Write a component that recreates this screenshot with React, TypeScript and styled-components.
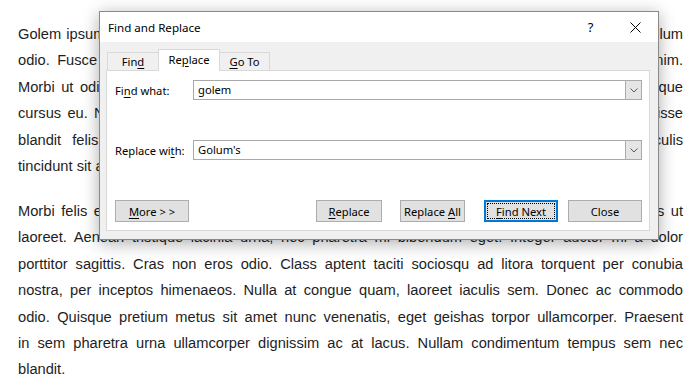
import React from 'react';
import styled, { createGlobalStyle } from 'styled-components';

const GlobalStyle = createGlobalStyle`
  html, body { margin: 0; padding: 0; background: #fff; }
  body { width: 699px; height: 390px; overflow: hidden; }
`;

const Page = styled.div`
  position: relative;
  width: 699px;
  height: 390px;
  box-sizing: border-box;
  padding: 21px 16px 0 18px;
  background: #fff;
  overflow: hidden;
`;

const Paragraph = styled.div`
  font-family: "Liberation Sans", Arial, sans-serif;
  font-size: 14.67px;
  line-height: 26.4px;
  color: #1e1e1e;
  & + & {
    margin-top: 18.6px;
  }
`;

const Line = styled.div<{ $last?: boolean }>`
  text-align: ${(p) => (p.$last ? 'left' : 'justify')};
  text-align-last: ${(p) => (p.$last ? 'left' : 'justify')};
`;

const Dialog = styled.div`
  position: absolute;
  left: 99px;
  top: 11px;
  width: 560px;
  height: 229px;
  box-sizing: border-box;
  border: 1px solid #8a8a8a;
  background: #f0f0f0;
  box-shadow: 0 3px 16px rgba(0, 0, 0, 0.33);
  display: flex;
  flex-direction: column;
  font-family: "Noto Sans", "Segoe UI", sans-serif;
  font-size: 11.2px;
  color: #000;
`;

const TitleBar = styled.div`
  height: 30px;
  background: #fff;
  display: flex;
  align-items: center;
  font-size: 11.6px;
`;

const Title = styled.div`
  flex: 1;
  padding-left: 8px;
`;

const TitleButton = styled.div`
  width: 45px;
  height: 30px;
  display: flex;
  align-items: center;
  justify-content: center;
  font-size: 13px;
`;

const Body = styled.div`
  flex: 1;
  display: flex;
  flex-direction: column;
  padding: 7px 8px 8px 6px;
`;

const TabRow = styled.div`
  display: flex;
  align-items: flex-end;
  height: 22px;
  padding-left: 1px;
  margin-bottom: -1px;
  position: relative;
  z-index: 1;
`;

const Tab = styled.div<{ $active?: boolean; $w: number }>`
  box-sizing: border-box;
  width: ${(p) => p.$w}px;
  height: ${(p) => (p.$active ? 22 : 18)}px;
  margin-bottom: ${(p) => (p.$active ? 0 : 1)}px;
  border: 1px solid #d9d9d9;
  border-bottom: none;
  background: ${(p) => (p.$active ? '#fff' : '#f0f0f0')};
  display: flex;
  align-items: ${(p) => (p.$active ? 'flex-start' : 'center')};
  padding-top: ${(p) => (p.$active ? 2 : 0)}px;
  justify-content: center;
  position: relative;
  z-index: ${(p) => (p.$active ? 2 : 1)};
  & + & {
    margin-left: -1px;
  }
`;

const Caption = styled.span`
  white-space: pre;
`;

const Key = styled.span`
  text-decoration: underline;
  text-underline-offset: 2px;
  text-decoration-thickness: 1px;
`;

const Panel = styled.div`
  flex: 1;
  background: #fff;
  border: 1px solid #d9d9d9;
  display: flex;
  flex-direction: column;
  padding: 9px 7px 8px 8px;
`;

const FieldRow = styled.div`
  display: flex;
  align-items: center;
  height: 20px;
  & + & {
    margin-top: 40px;
  }
`;

const Label = styled.div`
  width: 78px;
  flex: none;
`;

const Combo = styled.div`
  flex: 1;
  height: 20px;
  box-sizing: border-box;
  border: 1px solid #a9a9a9;
  display: flex;
  align-items: stretch;
`;

const ComboText = styled.div`
  flex: 1;
  padding-left: 4px;
  line-height: 18px;
`;

const ComboButton = styled.div`
  width: 16px;
  box-sizing: border-box;
  background: #e5e5e5;
  border-left: 1px solid #acacac;
  display: flex;
  align-items: center;
  justify-content: center;
`;

const ButtonRow = styled.div`
  margin-top: auto;
  display: flex;
  align-items: center;
`;

const Button = styled.div<{ $w: number; $gap?: number; $push?: boolean; $default?: boolean }>`
  position: relative;
  box-sizing: border-box;
  width: ${(p) => p.$w}px;
  height: 22px;
  margin-left: ${(p) => (p.$push ? 'auto' : `${p.$gap ?? 0}px`)};
  background: #e1e1e1;
  border: ${(p) => (p.$default ? '2px solid #0078d7' : '1px solid #adadad')};
  display: flex;
  align-items: center;
  justify-content: center;
  &::after {
    content: '';
    display: ${(p) => (p.$default ? 'block' : 'none')};
    position: absolute;
    inset: 1px;
    border: 1px dotted #000;
  }
`;

const Chevron = () => (
  <svg width="8" height="5" viewBox="0 0 8 5">
    <path d="M0.5 0.5 L4 4 L7.5 0.5" fill="none" stroke="#5a5a5a" strokeWidth="1" />
  </svg>
);

const CloseIcon = () => (
  <svg width="11" height="11" viewBox="0 0 11 11">
    <path d="M0.5 0.5 L10.5 10.5 M10.5 0.5 L0.5 10.5" stroke="#000" strokeWidth="1" />
  </svg>
);

const para1 = [
  'Golem ipsum dolor sit amet, consectetur adipiscing elit. Nam vitae nisl quis magna luctus vestibulum',
  'odio. Fusce sodales, lorem vel pretium tincidunt, nibh turpis elementum lacus, et a rutrum enim.',
  'Morbi ut odio vel augue tincidunt feugiat. Phasellus sed turpis at neque mollis et aliquam tristique',
  'cursus eu. Nunc pulvinar mi sed lectus ultrices, at eleifend arcu blandit tempor nunc. Suspendisse',
  'blandit felis id purus luctus, sed vehicula lorem convallis. Etiam pretium nisi at mi iaculis',
  'tincidunt sit amet a libero.',
];

const para2 = [
  'Morbi felis erat, commodo in dignissim vitae, dictum id lorem sed. Curabitur non magna finibus ut',
  'laoreet. Aenean tristique lacinia urna, nec pharetra mi bibendum eget. Integer auctor mi a dolor',
  'porttitor sagittis. Cras non eros odio. Class aptent taciti sociosqu ad litora torquent per conubia',
  'nostra, per inceptos himenaeos. Nulla at congue quam, laoreet iaculis sem. Donec ac commodo',
  'odio. Quisque pretium metus sit amet nunc venenatis, eget geishas torpor ullamcorper. Praesent',
  'in sem pharetra urna ullamcorper dignissim ac at lacus. Nullam condimentum tempus sem nec',
  'blandit.',
];

export default function App() {
  return (
    <>
      <GlobalStyle />
      <Page>
        <Paragraph>
          {para1.map((l, i) => (
            <Line key={i} $last={i === para1.length - 1}>{l}</Line>
          ))}
        </Paragraph>
        <Paragraph>
          {para2.map((l, i) => (
            <Line key={i} $last={i === para2.length - 1}>{l}</Line>
          ))}
        </Paragraph>

        <Dialog>
          <TitleBar>
            <Title>Find and Replace</Title>
            <TitleButton>?</TitleButton>
            <TitleButton><CloseIcon /></TitleButton>
          </TitleBar>
          <Body>
            <TabRow>
              <Tab $w={52}><Caption>Fin<Key>d</Key></Caption></Tab>
              <Tab $w={62} $active><Caption>Re<Key>p</Key>lace</Caption></Tab>
              <Tab $w={51}><Caption><Key>G</Key>o To</Caption></Tab>
            </TabRow>
            <Panel>
              <FieldRow>
                <Label>Fi<Key>n</Key>d what:</Label>
                <Combo>
                  <ComboText>golem</ComboText>
                  <ComboButton><Chevron /></ComboButton>
                </Combo>
              </FieldRow>
              <FieldRow>
                <Label>Replace wi<Key>t</Key>h:</Label>
                <Combo>
                  <ComboText>Golum's</ComboText>
                  <ComboButton><Chevron /></ComboButton>
                </Combo>
              </FieldRow>
              <ButtonRow>
                <Button $w={74}><Caption><Key>M</Key>ore &gt; &gt;</Caption></Button>
                <Button $w={66} $push><Caption><Key>R</Key>eplace</Caption></Button>
                <Button $w={65} $gap={18}><Caption>Replace <Key>A</Key>ll</Caption></Button>
                <Button $w={74} $gap={19} $default><Caption><Key>F</Key>ind Next</Caption></Button>
                <Button $w={74} $gap={10}><Caption>Close</Caption></Button>
              </ButtonRow>
            </Panel>
          </Body>
        </Dialog>
      </Page>
    </>
  );
}
